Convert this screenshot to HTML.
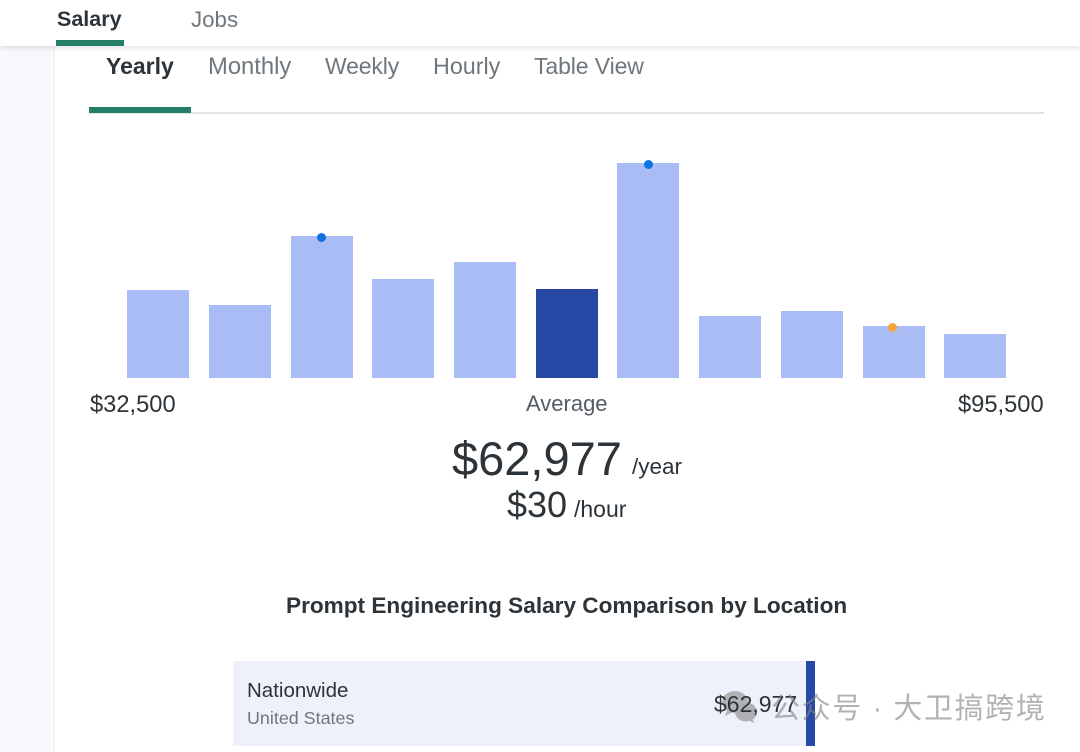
<!DOCTYPE html>
<html><head><meta charset="utf-8">
<style>
html,body{margin:0;padding:0;width:1080px;height:752px;overflow:hidden;background:#fff;font-family:"Liberation Sans",Arial,sans-serif;color:#2d3439}
#w{position:absolute;left:0;top:0;width:1080px;height:752px;overflow:hidden;filter:blur(.35px)}
.a{position:absolute;white-space:nowrap;line-height:1}
.b{position:absolute;background:#a9bcf5;width:62px}
.d{position:absolute;width:9px;height:9px;border-radius:50%;background:#0f72e5}
</style></head><body><div id="w">
<div class="a" style="left:0;top:46px;width:55px;height:706px;background:#f8f9fc"></div>
<div class="a" style="left:54px;top:46px;width:1px;height:706px;background:#eceef0"></div>
<div class="a" style="left:0;top:0;width:1080px;height:46px;background:#fff;box-shadow:0 2px 6px rgba(0,0,0,.12)"></div>
<div class="a" style="left:57px;top:9px;font-size:21.5px;font-weight:bold">Salary</div>
<div class="a" style="left:191px;top:9px;font-size:22.3px;color:#6f777d">Jobs</div>
<div class="a" style="left:56px;top:40px;width:68px;height:6px;background:#257f68"></div>

<div class="a" style="left:106px;top:55px;font-size:23px;font-weight:bold">Yearly</div>
<div class="a" style="left:208px;top:55px;font-size:23.8px;color:#6f777d">Monthly</div>
<div class="a" style="left:325px;top:55px;font-size:23px;letter-spacing:-.15px;color:#6f777d">Weekly</div>
<div class="a" style="left:433px;top:55px;font-size:23.3px;color:#6f777d">Hourly</div>
<div class="a" style="left:534px;top:55px;font-size:23px;letter-spacing:-.1px;color:#6f777d">Table View</div>
<div class="a" style="left:89px;top:112px;width:955px;height:2px;background:#e2e3e5"></div>
<div class="a" style="left:89px;top:107px;width:102px;height:6px;background:#257f68"></div>

<div class="b" style="left:127px;top:290px;height:88px"></div>
<div class="b" style="left:209px;top:305px;height:73px"></div>
<div class="b" style="left:291px;top:236px;height:142px"></div>
<div class="b" style="left:372px;top:279px;height:99px"></div>
<div class="b" style="left:454px;top:262px;height:116px"></div>
<div class="b" style="left:536px;top:289px;height:89px;background:#2748a5"></div>
<div class="b" style="left:617px;top:163px;height:215px"></div>
<div class="b" style="left:699px;top:316px;height:62px"></div>
<div class="b" style="left:781px;top:311px;height:67px"></div>
<div class="b" style="left:863px;top:326px;height:52px"></div>
<div class="b" style="left:944px;top:334px;height:44px"></div>
<div class="d" style="left:317px;top:233px"></div>
<div class="d" style="left:644px;top:160px"></div>
<div class="d" style="left:888px;top:323px;background:#f5a33c"></div>

<div class="a" style="left:90px;top:394px;font-size:23.7px">$32,500</div>
<div class="a" style="left:526px;top:393px;font-size:22px;color:#555c62">Average</div>
<div class="a" style="left:958px;top:394px;font-size:23.7px">$95,500</div>

<div class="a" style="left:452px;top:435px;font-size:47px">$62,977</div>
<div class="a" style="left:632px;top:456px;font-size:22.5px">/year</div>
<div class="a" style="left:507px;top:487px;font-size:36px">$30</div>
<div class="a" style="left:574px;top:498px;font-size:23px">/hour</div>

<div class="a" style="left:286px;top:595px;font-size:22.6px;font-weight:bold">Prompt Engineering Salary Comparison by Location</div>

<div class="a" style="left:233px;top:661px;width:574px;height:85px;background:#eef0fc"></div>
<div class="a" style="left:806px;top:661px;width:9px;height:85px;background:#2748a5"></div>
<div class="a" style="left:247px;top:681px;font-size:20.5px">Nationwide</div>
<div class="a" style="left:247px;top:710px;font-size:17.9px;color:#6f777d">United States</div>

<svg class="a" style="left:720px;top:689px;opacity:.85" width="42" height="36" viewBox="0 0 42 36">
<ellipse cx="15" cy="13" rx="13" ry="11" fill="#a8a8a8"/><path d="M7 21l-2 6 8-4z" fill="#a8a8a8"/>
<ellipse cx="26" cy="23" rx="11" ry="9.5" fill="#a4a4a4"/><path d="M32 30l3 4-8-3z" fill="#a4a4a4"/>
</svg>
<div class="a" style="left:714px;top:693px;font-size:23px">$62,977</div>
<div class="a" style="left:771px;top:695px;font-size:29px;letter-spacing:1.6px;color:rgba(130,130,130,.62);font-family:'Liberation Sans','Noto Sans CJK SC',sans-serif">公众号 · 大卫搞跨境</div>
</div></body></html>
